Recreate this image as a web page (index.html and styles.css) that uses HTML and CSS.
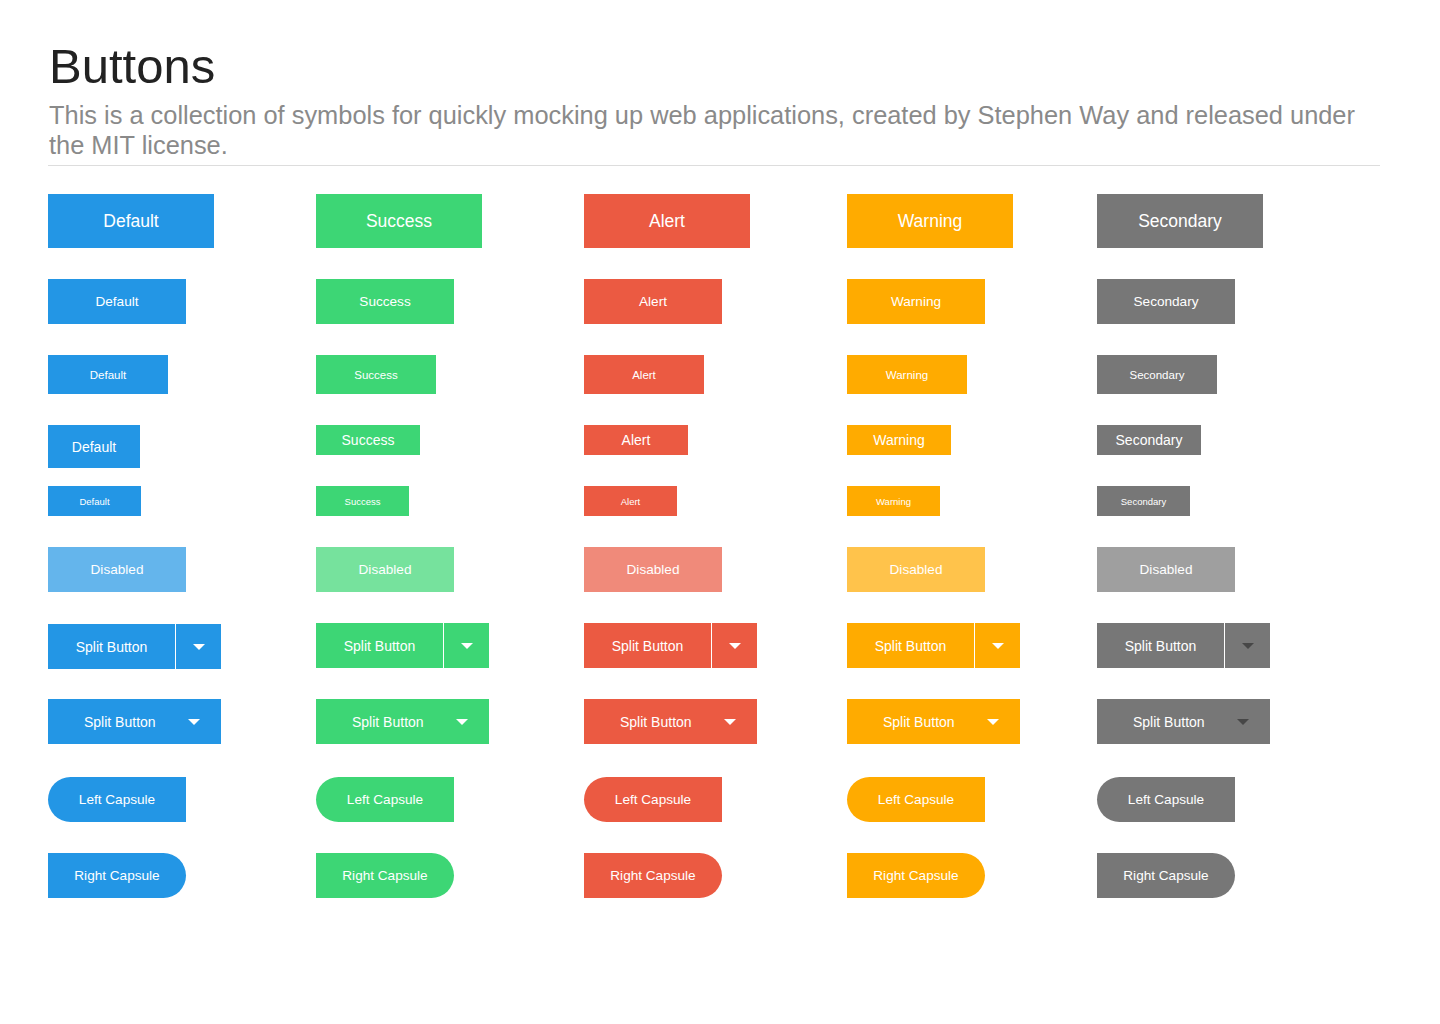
FILE: index.html
```html
<!DOCTYPE html>
<html lang="en">
<head>
<meta charset="utf-8">
<title>Buttons</title>
<link rel="stylesheet" href="styles.css">
</head>
<body>
<header class="head">
  <h1 class="title">Buttons</h1>
  <p class="lead">This is a collection of symbols for quickly mocking up web applications, created by Stephen Way and released under the MIT license.</p>
  <hr class="rule">
</header>

<main class="board">
  <div class="row r1">
    <span class="btn xl c-blue">Default</span>
    <span class="btn xl c-green">Success</span>
    <span class="btn xl c-red">Alert</span>
    <span class="btn xl c-yellow">Warning</span>
    <span class="btn xl c-grey">Secondary</span>
  </div>
  <div class="row r2">
    <span class="btn md c-blue">Default</span>
    <span class="btn md c-green">Success</span>
    <span class="btn md c-red">Alert</span>
    <span class="btn md c-yellow">Warning</span>
    <span class="btn md c-grey">Secondary</span>
  </div>
  <div class="row r3">
    <span class="btn sm c-blue">Default</span>
    <span class="btn sm c-green">Success</span>
    <span class="btn sm c-red">Alert</span>
    <span class="btn sm c-yellow">Warning</span>
    <span class="btn sm c-grey">Secondary</span>
  </div>
  <div class="row r4">
    <span class="btn tall c-blue">Default</span>
    <span class="btn flat c-green">Success</span>
    <span class="btn flat c-red">Alert</span>
    <span class="btn flat c-yellow">Warning</span>
    <span class="btn flat c-grey">Secondary</span>
  </div>
  <div class="row r5">
    <span class="btn xs c-blue">Default</span>
    <span class="btn xs c-green">Success</span>
    <span class="btn xs c-red">Alert</span>
    <span class="btn xs c-yellow">Warning</span>
    <span class="btn xs c-grey">Secondary</span>
  </div>
  <div class="row r6">
    <span class="btn md disabled c-blue">Disabled</span>
    <span class="btn md disabled c-green">Disabled</span>
    <span class="btn md disabled c-red">Disabled</span>
    <span class="btn md disabled c-yellow">Disabled</span>
    <span class="btn md disabled c-grey">Disabled</span>
  </div>
  <div class="row r7">
    <span class="split c-blue shift"><span class="split-main">Split Button</span><span class="split-drop"><i class="caret"></i></span></span>
    <span class="split c-green"><span class="split-main">Split Button</span><span class="split-drop"><i class="caret"></i></span></span>
    <span class="split c-red"><span class="split-main">Split Button</span><span class="split-drop"><i class="caret"></i></span></span>
    <span class="split c-yellow"><span class="split-main">Split Button</span><span class="split-drop"><i class="caret"></i></span></span>
    <span class="split c-grey"><span class="split-main">Split Button</span><span class="split-drop"><i class="caret dark"></i></span></span>
  </div>
  <div class="row r8">
    <span class="drop c-blue">Split Button<i class="caret"></i></span>
    <span class="drop c-green">Split Button<i class="caret"></i></span>
    <span class="drop c-red">Split Button<i class="caret"></i></span>
    <span class="drop c-yellow">Split Button<i class="caret"></i></span>
    <span class="drop c-grey">Split Button<i class="caret dark"></i></span>
  </div>
  <div class="row r9">
    <span class="btn md cap-left c-blue">Left Capsule</span>
    <span class="btn md cap-left c-green">Left Capsule</span>
    <span class="btn md cap-left c-red">Left Capsule</span>
    <span class="btn md cap-left c-yellow">Left Capsule</span>
    <span class="btn md cap-left c-grey">Left Capsule</span>
  </div>
  <div class="row r10">
    <span class="btn md cap-right c-blue">Right Capsule</span>
    <span class="btn md cap-right c-green">Right Capsule</span>
    <span class="btn md cap-right c-red">Right Capsule</span>
    <span class="btn md cap-right c-yellow">Right Capsule</span>
    <span class="btn md cap-right c-grey">Right Capsule</span>
  </div>
</main>
</body>
</html>
```
FILE: styles.css
```css
html, body {
  margin: 0;
  padding: 0;
  background: #ffffff;
}

body {
  font-family: "Liberation Sans", Arial, Helvetica, sans-serif;
  color: #222222;
  padding: 0 60px 0 48px;
}

.head {
  padding-top: 42px;
}

.title {
  margin: 0 0 0 1px;
  font-size: 49px;
  line-height: 49px;
  font-weight: 400;
  color: #222222;
}

.lead {
  margin: 9px 0 0 1px;
  max-width: 1312px;
  font-size: 25.4px;
  line-height: 30px;
  color: #8a8a8a;
}

.rule {
  margin: 5px 0 0 0;
  border: 0;
  height: 1px;
  background: #dddddd;
}

.board {
  padding-top: 28px;
}

.row {
  display: grid;
  grid-template-columns: 268px 268px 263px 250px 1fr;
  align-items: start;
  margin-bottom: 31px;
}

.row.r4 { margin-bottom: 18px; }
.row.r8 { margin-bottom: 33px; }

/* colours */
.c-blue   { --bg: #2396e5; }
.c-green  { --bg: #3dd675; }
.c-red    { --bg: #eb5a42; }
.c-yellow { --bg: #ffab00; }
.c-grey   { --bg: #777777; }

.btn {
  display: flex;
  align-items: center;
  justify-content: center;
  background: var(--bg);
  color: #ffffff;
  white-space: nowrap;
  box-sizing: border-box;
}

.xl   { width: 166px; height: 54px; font-size: 17.5px; }
.md   { width: 138px; height: 45px; font-size: 13.6px; }
.sm   { width: 120px; height: 39px; font-size: 11.5px; }
.tall { width: 92px;  height: 43px; font-size: 14px; }
.flat { width: 104px; height: 30px; font-size: 14px; }
.xs   { width: 93px;  height: 30px; font-size: 9.5px; }

.disabled { opacity: 0.7; }

.cap-left  { border-radius: 23px 0 0 23px; }
.cap-right { border-radius: 0 23px 23px 0; }

/* split buttons */
.split {
  display: flex;
  width: 173px;
  height: 45px;
  gap: 1px;
}

.shift { margin-top: 1px; margin-bottom: -1px; }

.split-main,
.split-drop {
  display: flex;
  align-items: center;
  justify-content: center;
  background: var(--bg);
  color: #ffffff;
  font-size: 14px;
  white-space: nowrap;
}

.split-main { width: 127px; }
.split-drop { flex: 1; }

.drop {
  display: flex;
  align-items: center;
  box-sizing: border-box;
  width: 173px;
  height: 45px;
  padding-left: 36px;
  gap: 32px;
  background: var(--bg);
  color: #ffffff;
  font-size: 14px;
  white-space: nowrap;
}

.caret {
  display: block;
  width: 0;
  height: 0;
  border-left: 6px solid transparent;
  border-right: 6px solid transparent;
  border-top: 6px solid #ffffff;
  margin-top: 1px;
}

.caret.dark { border-top-color: #474747; }
```
